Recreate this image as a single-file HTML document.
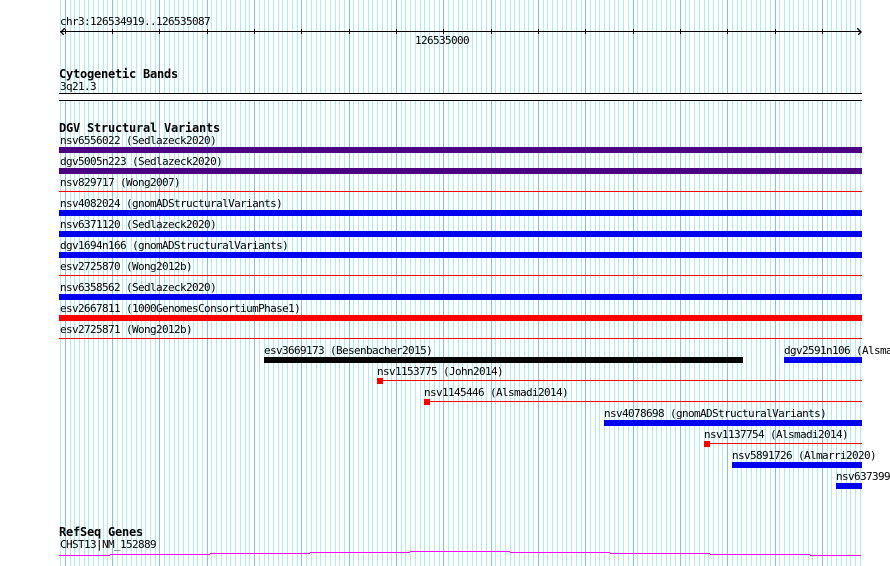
<!DOCTYPE html>
<html lang="en">
<head>
<meta charset="utf-8">
<title>Genome browser tracks</title>
<style>
html,body{margin:0;padding:0;background:#fff;width:890px;height:566px;overflow:hidden}
svg{display:block;position:absolute;left:0;top:0}
text{font-family:"DejaVu Sans Mono","Liberation Mono",monospace;font-size:11px;letter-spacing:-.62px;fill:#000;white-space:pre;font-kerning:none}
text.b{font-weight:bold;font-size:12px;letter-spacing:-.224px}
</style>
</head>
<body>
<svg width="890" height="566" viewBox="0 0 890 566" xmlns="http://www.w3.org/2000/svg">
<g shape-rendering="crispEdges">
<path stroke="#a8f0f0" stroke-width="1" fill="none" d="M60.5 0V566M70.5 0V566M74.5 0V566M79.5 0V566M84.5 0V566M88.5 0V566M93.5 0V566M98.5 0V566M103.5 0V566M107.5 0V566M117.5 0V566M122.5 0V566M126.5 0V566M131.5 0V566M136.5 0V566M141.5 0V566M145.5 0V566M150.5 0V566M155.5 0V566M164.5 0V566M169.5 0V566M174.5 0V566M178.5 0V566M183.5 0V566M188.5 0V566M193.5 0V566M197.5 0V566M202.5 0V566M211.5 0V566M216.5 0V566M221.5 0V566M226.5 0V566M230.5 0V566M235.5 0V566M240.5 0V566M245.5 0V566M249.5 0V566M259.5 0V566M264.5 0V566M268.5 0V566M273.5 0V566M278.5 0V566M282.5 0V566M287.5 0V566M292.5 0V566M297.5 0V566M306.5 0V566M311.5 0V566M316.5 0V566M320.5 0V566M325.5 0V566M330.5 0V566M335.5 0V566M339.5 0V566M344.5 0V566M353.5 0V566M358.5 0V566M363.5 0V566M368.5 0V566M372.5 0V566M377.5 0V566M382.5 0V566M387.5 0V566M391.5 0V566M401.5 0V566M405.5 0V566M410.5 0V566M415.5 0V566M420.5 0V566M424.5 0V566M429.5 0V566M434.5 0V566M439.5 0V566M448.5 0V566M453.5 0V566M458.5 0V566M462.5 0V566M467.5 0V566M472.5 0V566M476.5 0V566M481.5 0V566M486.5 0V566M495.5 0V566M500.5 0V566M505.5 0V566M510.5 0V566M514.5 0V566M519.5 0V566M524.5 0V566M528.5 0V566M533.5 0V566M543.5 0V566M547.5 0V566M552.5 0V566M557.5 0V566M562.5 0V566M566.5 0V566M571.5 0V566M576.5 0V566M581.5 0V566M590.5 0V566M595.5 0V566M599.5 0V566M604.5 0V566M609.5 0V566M614.5 0V566M618.5 0V566M623.5 0V566M628.5 0V566M637.5 0V566M642.5 0V566M647.5 0V566M652.5 0V566M656.5 0V566M661.5 0V566M666.5 0V566M670.5 0V566M675.5 0V566M685.5 0V566M689.5 0V566M694.5 0V566M699.5 0V566M704.5 0V566M708.5 0V566M713.5 0V566M718.5 0V566M722.5 0V566M732.5 0V566M737.5 0V566M741.5 0V566M746.5 0V566M751.5 0V566M756.5 0V566M760.5 0V566M765.5 0V566M770.5 0V566M779.5 0V566M784.5 0V566M789.5 0V566M793.5 0V566M798.5 0V566M803.5 0V566M808.5 0V566M812.5 0V566M817.5 0V566M827.5 0V566M831.5 0V566M836.5 0V566M841.5 0V566M846.5 0V566M850.5 0V566M855.5 0V566M860.5 0V566"/>
<path stroke="#80c0f0" stroke-width="1" fill="none" d="M65.5 0V566M112.5 0V566M159.5 0V566M207.5 0V566M254.5 0V566M301.5 0V566M349.5 0V566M396.5 0V566M443.5 0V566M491.5 0V566M538.5 0V566M585.5 0V566M633.5 0V566M680.5 0V566M727.5 0V566M775.5 0V566M822.5 0V566"/>

<!-- axis -->
<path stroke="#000" fill="none" d="M60 31.5H861M65.5 29V34M112.5 29V34M159.5 29V34M207.5 29V34M254.5 29V34M301.5 29V34M349.5 29V34M396.5 29V34M443.5 29V34M491.5 29V34M538.5 29V34M585.5 29V34M633.5 29V34M680.5 29V34M727.5 29V34M775.5 29V34M822.5 29V34"/>
<path stroke="#000" fill="none" d="M65 28.5H64V29.5H63V30.5H62V31.5H61V32.5H62V33.5H63V34.5H64M857 28.5H858V29.5H859V30.5H860V31.5H861V32.5H860V33.5H859V34.5H858"/>

<!-- cytogenetic band -->
<rect x="59" y="93" width="803" height="8" fill="#fff"/>
<rect x="59" y="93" width="803" height="1" fill="#000"/>
<rect x="59" y="100" width="803" height="1" fill="#000"/>

<!-- full-width features -->
<rect x="59" y="147" width="803" height="6" fill="#4b0082"/>
<rect x="59" y="168" width="803" height="6" fill="#4b0082"/>
<rect x="59" y="191" width="803" height="1" fill="#ff0000"/>
<rect x="59" y="210" width="803" height="6" fill="#0000ee"/>
<rect x="59" y="231" width="803" height="6" fill="#0000ee"/>
<rect x="59" y="252" width="803" height="6" fill="#0000ee"/>
<rect x="59" y="275" width="803" height="1" fill="#ff0000"/>
<rect x="59" y="294" width="803" height="6" fill="#0000ee"/>
<rect x="59" y="315" width="803" height="6" fill="#ff0000"/>
<rect x="59" y="338" width="803" height="1" fill="#ff0000"/>

<!-- staggered features -->
<rect x="264" y="357" width="479" height="6" fill="#000"/>
<rect x="784" y="357" width="78" height="6" fill="#0000ee"/>
<rect x="377" y="378" width="6" height="6" fill="#ff0000"/>
<rect x="383" y="380" width="479" height="1" fill="#ff0000"/>
<rect x="424" y="399" width="6" height="6" fill="#ff0000"/>
<rect x="430" y="401" width="432" height="1" fill="#ff0000"/>
<rect x="604" y="420" width="258" height="6" fill="#0000ee"/>
<rect x="704" y="441" width="6" height="6" fill="#ff0000"/>
<rect x="710" y="443" width="152" height="1" fill="#ff0000"/>
<rect x="732" y="462" width="130" height="6" fill="#0000ee"/>
<rect x="836" y="483" width="26" height="6" fill="#0000ee"/>

<!-- gene -->
<path stroke="#ff00ff" fill="none" d="M59 555.5H110M110 554.5H210M210 553.5H310M310 552.5H410M410 551.5H510M510 552.5H610M610 553.5H710M710 554.5H810M810 555.5H861"/>
</g>

<text x="60" y="25">chr3:126534919..126535087</text>
<text x="415" y="44">126535000</text>
<text class="b" x="59" y="78">Cytogenetic Bands</text>
<text x="60" y="90">3q21.3</text>
<text class="b" x="59" y="132">DGV Structural Variants</text>
<text x="60" y="144">nsv6556022 (Sedlazeck2020)</text>
<text x="60" y="165">dgv5005n223 (Sedlazeck2020)</text>
<text x="60" y="186">nsv829717 (Wong2007)</text>
<text x="60" y="207">nsv4082024 (gnomADStructuralVariants)</text>
<text x="60" y="228">nsv6371120 (Sedlazeck2020)</text>
<text x="60" y="249">dgv1694n166 (gnomADStructuralVariants)</text>
<text x="60" y="270">esv2725870 (Wong2012b)</text>
<text x="60" y="291">nsv6358562 (Sedlazeck2020)</text>
<text x="60" y="312">esv2667811 (1000GenomesConsortiumPhase1)</text>
<text x="60" y="333">esv2725871 (Wong2012b)</text>
<text x="264" y="354">esv3669173 (Besenbacher2015)</text>
<text x="784" y="354">dgv2591n106 (Alsmadi2014)</text>
<text x="377" y="375">nsv1153775 (John2014)</text>
<text x="424" y="396">nsv1145446 (Alsmadi2014)</text>
<text x="604" y="417">nsv4078698 (gnomADStructuralVariants)</text>
<text x="704" y="438">nsv1137754 (Alsmadi2014)</text>
<text x="732" y="459">nsv5891726 (Almarri2020)</text>
<text x="836" y="480">nsv6373990</text>
<text class="b" x="59" y="536">RefSeq Genes</text>
<text x="60" y="548">CHST13|NM_152889</text>
</svg>
</body>
</html>
